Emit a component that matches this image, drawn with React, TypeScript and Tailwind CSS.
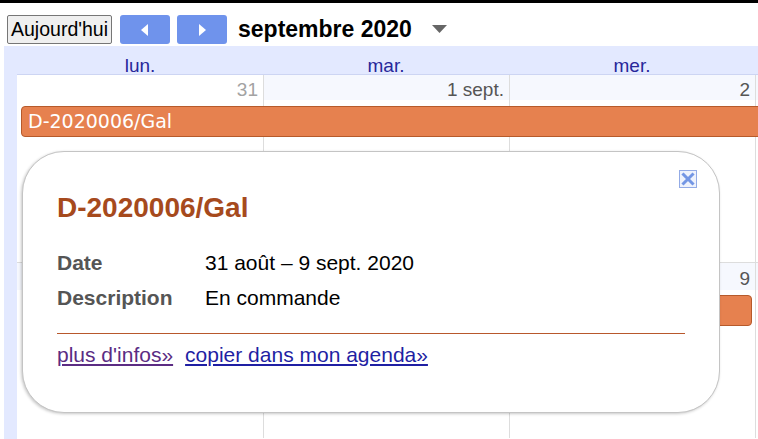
import React from 'react';

const days = [
  { name: 'lun.', num: '31', other: true },
  { name: 'mar.', num: '1 sept.', other: false },
  { name: 'mer.', num: '2', other: false },
  { name: 'jeu.', num: '3', other: false },
];

const week2 = ['7', '8', '9', '10'];

function CloseIcon() {
  return (
    <svg width="18" height="18" viewBox="0 0 18 18">
      <rect x="0.5" y="0.5" width="17" height="17" fill="#eef2fc" stroke="#93abe6" />
      <path d="M4.5 4.5 L13.5 13.5 M13.5 4.5 L4.5 13.5" stroke="#7396e4" strokeWidth="3" strokeLinecap="square" />
    </svg>
  );
}

export default function App() {
  return (
    <div className="relative w-[758px] h-[439px] overflow-hidden bg-white border-t-[3px] border-black font-['Liberation_Sans',Arial,sans-serif]">
      {/* toolbar */}
      <div className="flex items-start h-[43px] pl-[7px] pt-[12px]">
        <button className="h-[29px] w-[105px] border border-[#767676] bg-[#efefef] rounded-[2px] text-[19.5px] leading-none text-black">
          Aujourd'hui
        </button>
        <button className="ml-[8px] w-[50px] h-[29px] rounded-[3px] bg-[#6f93ec] flex items-center justify-center">
          <svg width="8" height="12" viewBox="0 0 8 12">
            <path d="M7 0 L0 6 L7 12 Z" fill="white" />
          </svg>
        </button>
        <button className="ml-[7px] w-[50px] h-[29px] rounded-[3px] bg-[#6f93ec] flex items-center justify-center">
          <svg width="8" height="12" viewBox="0 0 8 12">
            <path d="M1 0 L8 6 L1 12 Z" fill="white" />
          </svg>
        </button>
        <div className="ml-[11px] h-[29px] flex items-center text-[23px] font-bold text-black leading-none">
          septembre 2020
        </div>
        <div className="ml-[20px] h-[29px] flex items-center">
          <svg width="15" height="9" viewBox="0 0 15 9">
            <path d="M0 0 L15 0 L7.5 8 Z" fill="#666" />
          </svg>
        </div>
      </div>

      {/* calendar */}
      <div className="ml-[4px] h-[393px] bg-[#e3e9ff] pl-[13px]">
        <div className="grid grid-cols-[246px_246px_246px_246px] h-[29px] border-b border-[#cdd5f3]">
          {days.map((d) => (
            <div key={d.name} className="text-center pt-[10px] text-[19px] leading-none text-[#27279a]">
              {d.name}
            </div>
          ))}
        </div>

        <div className="bg-white h-[364px]">
          {/* week 1 */}
          <div className="relative h-[188px] border-b border-[#dddddd]">
            <div className="grid grid-cols-[246px_246px_246px_246px] h-full">
              {days.map((d, i) => (
                <div key={d.num} className={i > 0 ? 'border-l border-[#dddddd]' : ''}>
                  <div
                    className={
                      'h-[25px] pt-[5px] pr-[5px] text-right text-[19px] leading-none ' +
                      (d.other ? 'bg-white text-[#a3a3a3]' : 'bg-[#f6f8fe] text-[#555]')
                    }
                  >
                    {d.num}
                  </div>
                </div>
              ))}
            </div>
            <div className="absolute left-[4px] right-[-10px] top-[31px] h-[31px] flex items-center pl-[6px] bg-[#e6814f] border border-[#b65a2b] rounded-[4px] text-white text-[19px] font-['DejaVu_Sans',sans-serif]">
              D-2020006/Gal
            </div>
          </div>

          {/* week 2 */}
          <div className="relative h-[175px]">
            <div className="grid grid-cols-[246px_246px_246px_246px] h-full">
              {week2.map((n, i) => (
                <div key={n} className={i > 0 ? 'border-l border-[#dddddd]' : ''}>
                  <div className="h-[27px] pt-[6px] pr-[5px] text-right text-[19px] leading-none bg-[#f6f8fe] text-[#555]">
                    {n}
                  </div>
                </div>
              ))}
            </div>
            <div className="absolute left-[12px] w-[723px] top-[32px] h-[31px] bg-[#e6814f] border border-[#b65a2b] rounded-[4px]" />
          </div>
        </div>
      </div>

      {/* bubble */}
      <div className="absolute left-[22px] top-[148px] w-[698px] h-[262px] bg-white rounded-[42px] border border-[#c4c4c4] shadow-[-1px_1px_3px_rgba(0,0,0,0.22)] px-[34px] pt-[42px]">
        <div className="absolute right-[22px] top-[18px]">
          <CloseIcon />
        </div>
        <div className="h-[28px] text-[28px] font-bold leading-none text-[#a64a1d]">D-2020006/Gal</div>
        <div className="mt-[30px] grid grid-cols-[148px_1fr] gap-y-[14px] text-[21px] leading-none">
          <div className="font-bold text-[#555]">Date</div>
          <div className="text-black">31 août – 9 sept. 2020</div>
          <div className="font-bold text-[#555]">Description</div>
          <div className="text-black">En commande</div>
        </div>
        <div className="mt-[25px] h-px bg-[#b8582c]" />
        <div className="mt-[10px] flex text-[21px] leading-none">
          <a href="#" className="underline text-[#5b2c83]">plus d'infos»</a>
          <a href="#" className="ml-[12px] underline text-[#1f1fa3]">copier dans mon agenda»</a>
        </div>
      </div>
    </div>
  );
}
